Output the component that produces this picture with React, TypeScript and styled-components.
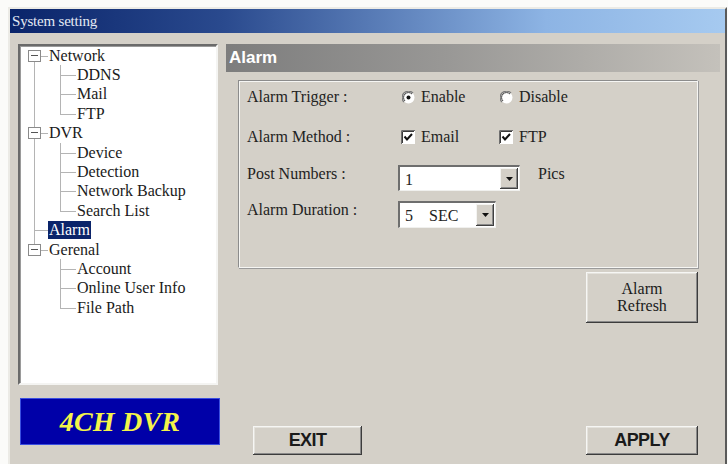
import React from "react";
import styled, { createGlobalStyle } from "styled-components";

const Global = createGlobalStyle`
  html, body { margin: 0; padding: 0; background: #fbfbf9; overflow: hidden; }
  body { width: 728px; height: 464px; }
  * { box-sizing: border-box; }
`;

const SERIF = `"Liberation Serif", "Times New Roman", serif`;
const SANS = `"Liberation Sans", Arial, sans-serif`;

const Window = styled.div`
  margin: 7px 0 0 8px;
  width: 719px;
  height: 470px;
  background: #d4d0c8;
  border-top: 2px solid #ecebe6;
  border-left: 2px solid #ecebe6;
  border-right: 2px solid #5a5a5a;
  display: flex;
  flex-direction: column;
`;

const TitleBar = styled.div`
  height: 24px;
  background: linear-gradient(to right, #0a246a 0%, #2a4a8e 30%, #8db4e4 75%, #a6caf0 100%);
  color: #e4eaf4;
  font-family: ${SERIF};
  font-size: 15px;
  line-height: 24px;
  padding-left: 2px;
  letter-spacing: -0.2px;
`;

const Content = styled.div`
  display: grid;
  grid-template-columns: 202px 494px;
  column-gap: 6px;
  padding: 11px 0 0 8px;
`;

const LeftCol = styled.div`
  display: flex;
  flex-direction: column;
`;

const TreePanel = styled.div`
  width: 200px;
  height: 341px;
  background: #ffffff;
  border-top: 2px solid #6a6a6a;
  border-left: 2px solid #6a6a6a;
  border-bottom: 2px solid #f4f4f2;
  border-right: 2px solid #f4f4f2;
  box-shadow: inset 1px 1px 0 #9a9a9a;
`;

const TreeRow = styled.div`
  display: flex;
  height: 19.4px;
  align-items: stretch;
`;

const Guide = styled.span<{ $x: number; $v: "full" | "top" | "bottom" | "none"; $h: boolean }>`
  position: relative;
  width: 28px;
  flex: none;
  &::before {
    content: "";
    position: absolute;
    left: ${(p) => p.$x}px;
    width: 1px;
    background: #b4b4b4;
    display: ${(p) => (p.$v === "none" ? "none" : "block")};
    top: ${(p) => (p.$v === "bottom" ? "50%" : "0")};
    bottom: ${(p) => (p.$v === "top" ? "50%" : "0")};
  }
  &::after {
    content: "";
    position: absolute;
    left: ${(p) => p.$x}px;
    right: 0;
    top: 50%;
    height: 1px;
    background: #b4b4b4;
    display: ${(p) => (p.$h ? "block" : "none")};
  }
`;

const Expander = styled.span`
  position: absolute;
  left: 8px;
  top: 50%;
  margin-top: -6px;
  width: 13px;
  height: 12px;
  background: #fff;
  border: 1px solid #8a8a8a;
  z-index: 1;
  &::before {
    content: "";
    position: absolute;
    left: 2px;
    right: 2px;
    top: 4px;
    height: 1px;
    background: #555;
  }
`;

const TreeLabel = styled.span<{ $selected?: boolean }>`
  font-family: ${SERIF};
  font-size: 16px;
  line-height: 18px;
  align-self: center;
  padding: 0 1px;
  color: ${(p) => (p.$selected ? "#ffffff" : "#1a1a1a")};
  background: ${(p) => (p.$selected ? "#0a246a" : "transparent")};
  white-space: nowrap;
`;

const Logo = styled.div`
  margin: 13px 0 0 2px;
  width: 200px;
  height: 47px;
  background: #0000a8;
  border: 1px solid #3a4ee0;
  display: flex;
  align-items: center;
  justify-content: center;
  color: #f4f44a;
  font-family: ${SERIF};
  font-weight: bold;
  font-style: italic;
  font-size: 28px;
  letter-spacing: 0.2px;
`;

const RightCol = styled.div`
  display: flex;
  flex-direction: column;
  height: 411px;
`;

const Header = styled.div`
  height: 28px;
  background: linear-gradient(to right, #7d7d7d 0%, #999896 45%, #c4c1bb 100%);
  color: #ffffff;
  font-family: ${SANS};
  font-weight: bold;
  font-size: 17px;
  line-height: 28px;
  padding-left: 3px;
`;

const Body = styled.div`
  flex: 1;
  display: flex;
  flex-direction: column;
  padding: 8px 22px 0 12px;
`;

const GroupBox = styled.div`
  height: 188px;
  border-top: 1px solid #8c8c8c;
  border-left: 1px solid #8c8c8c;
  border-right: 1px solid #f6f6f4;
  border-bottom: 1px solid #f6f6f4;
  box-shadow: inset 1px 1px 0 #f6f6f4, 1px 1px 0 #9a9a9a;
  padding: 6px 0 0 8px;
  display: grid;
  grid-template-columns: 151px 1fr;
  grid-auto-rows: min-content;
`;

const FieldLabel = styled.div<{ $h: number; $mt: number; $top?: boolean }>`
  height: ${(p) => p.$h}px;
  margin-top: ${(p) => p.$mt}px;
  display: flex;
  align-items: ${(p) => (p.$top ? "flex-start" : "center")};
  font-family: ${SERIF};
  font-size: 16px;
  line-height: 18px;
  color: #222;
  white-space: nowrap;
`;

const FieldControls = styled.div<{ $h: number; $mt: number; $top?: boolean }>`
  height: ${(p) => p.$h}px;
  margin-top: ${(p) => p.$mt}px;
  display: flex;
  align-items: ${(p) => (p.$top ? "flex-start" : "center")};
`;

const Option = styled.label`
  width: 98px;
  display: flex;
  align-items: center;
  font-family: ${SERIF};
  font-size: 16px;
  color: #222;
`;

const Indicator = styled.span`
  width: 20px;
  display: flex;
  justify-content: center;
  align-items: center;
  margin-right: 3px;
`;

const Combo = styled.div<{ $w: number; $h: number }>`
  width: ${(p) => p.$w}px;
  height: ${(p) => p.$h}px;
  background: #fff;
  border-top: 2px solid #6e6e6e;
  border-left: 2px solid #6e6e6e;
  border-right: 1px solid #f0f0ee;
  border-bottom: 1px solid #f0f0ee;
  display: flex;
  align-items: stretch;
  padding: 1px 1px 1px 0;
`;

const ComboText = styled.span`
  flex: 1;
  font-family: ${SERIF};
  font-size: 16px;
  line-height: 20px;
  padding: 2px 0 0 5px;
  color: #222;
  white-space: pre;
`;

const ArrowButton = styled.span`
  width: 18px;
  background: #d4d0c8;
  box-shadow: inset -1px -1px 0 #404040, inset 1px 1px 0 #f4f4f2, inset -2px -2px 0 #8a8a8a;
  display: flex;
  align-items: center;
  justify-content: center;
`;

const Suffix = styled.span`
  margin-left: 18px;
  font-family: ${SERIF};
  font-size: 16px;
  line-height: 18px;
  color: #222;
`;

const ButtonBase = styled.button<{ $w: number; $h: number }>`
  width: ${(p) => p.$w}px;
  height: ${(p) => p.$h}px;
  background: #d4d0c8;
  border: none;
  padding: 0;
  box-shadow: inset -1px -1px 0 #3c3c3c, inset 1px 1px 0 #f6f6f4, inset -2px -2px 0 #8a8a8a, inset 2px 2px 0 #e4e2dc;
  color: #1a1a1a;
  cursor: default;
`;

const RefreshButton = styled(ButtonBase)`
  align-self: flex-end;
  margin-top: 4px;
  font-family: ${SERIF};
  font-size: 16px;
  line-height: 17px;
  padding-bottom: 2px;
`;

const FooterRow = styled.div`
  margin-top: auto;
  display: flex;
  justify-content: space-between;
  padding-left: 15px;
`;

const BigButton = styled(ButtonBase)`
  font-family: ${SANS};
  font-weight: bold;
  font-size: 18px;
  letter-spacing: -0.6px;
`;

const Radio = ({ checked }: { checked: boolean }) => (
  <svg width="13" height="13" viewBox="0 0 13 13">
    <circle cx="6.5" cy="6.5" r="6" fill="#fff" />
    <path d="M2 11 A6 6 0 0 1 11 2" fill="none" stroke="#7a7a7a" strokeWidth="1.3" />
    <path d="M3 10 A4.6 4.6 0 0 1 10 3" fill="none" stroke="#404040" strokeWidth="1" />
    {checked && <circle cx="6.5" cy="6.5" r="2" fill="#111" />}
  </svg>
);

const Check = () => (
  <svg width="14" height="14" viewBox="0 0 14 14">
    <rect x="0" y="0" width="14" height="14" fill="#fff" />
    <path d="M0.5 14 V0.5 H14" fill="none" stroke="#6e6e6e" strokeWidth="1" />
    <path d="M1.5 13 V1.5 H13" fill="none" stroke="#3a3a3a" strokeWidth="1" />
    <path d="M3.5 6.5 L6 9.5 L11 4" fill="none" stroke="#111" strokeWidth="2" />
  </svg>
);

const DownArrow = () => (
  <svg width="7" height="4" viewBox="0 0 7 4">
    <path d="M0 0 H7 L3.5 4 Z" fill="#111" />
  </svg>
);

type Node = { label: string; children?: string[]; selected?: boolean };

const tree: Node[] = [
  { label: "Network", children: ["DDNS", "Mail", "FTP"] },
  { label: "DVR", children: ["Device", "Detection", "Network Backup", "Search List"] },
  { label: "Alarm", selected: true },
  { label: "Gerenal", children: ["Account", "Online User Info", "File Path"] },
];

const Tree = () => {
  const rows: React.ReactNode[] = [];
  tree.forEach((n, i) => {
    const first = i === 0;
    const lastRoot = i === tree.length - 1;
    const v = first ? "bottom" : lastRoot ? "top" : "full";
    rows.push(
      <TreeRow key={n.label}>
        <Guide $x={14} $v={v} $h={true}>
          {n.children && <Expander />}
        </Guide>
        <TreeLabel $selected={n.selected}>{n.label}</TreeLabel>
      </TreeRow>
    );
    (n.children || []).forEach((c, j) => {
      const lastChild = j === (n.children as string[]).length - 1;
      rows.push(
        <TreeRow key={n.label + c}>
          <Guide $x={14} $v={lastRoot ? "none" : "full"} $h={false} />
          <Guide $x={12} $v={lastChild ? "top" : "full"} $h={true} />
          <TreeLabel>{c}</TreeLabel>
        </TreeRow>
      );
    });
  });
  return <TreePanel>{rows}</TreePanel>;
};

export default function App() {
  return (
    <>
      <Global />
      <Window>
        <TitleBar>System setting</TitleBar>
        <Content>
          <LeftCol>
            <Tree />
            <Logo>4CH DVR</Logo>
          </LeftCol>
          <RightCol>
            <Header>Alarm</Header>
            <Body>
              <GroupBox>
                <FieldLabel $h={20} $mt={0}>Alarm Trigger :</FieldLabel>
                <FieldControls $h={20} $mt={0}>
                  <Option>
                    <Indicator><Radio checked /></Indicator>Enable
                  </Option>
                  <Option>
                    <Indicator><Radio checked={false} /></Indicator>Disable
                  </Option>
                </FieldControls>

                <FieldLabel $h={20} $mt={20}>Alarm Method :</FieldLabel>
                <FieldControls $h={20} $mt={20}>
                  <Option>
                    <Indicator><Check /></Indicator>Email
                  </Option>
                  <Option>
                    <Indicator><Check /></Indicator>FTP
                  </Option>
                </FieldControls>

                <FieldLabel $h={26} $mt={18} $top>Post Numbers :</FieldLabel>
                <FieldControls $h={26} $mt={18} $top>
                  <Combo $w={122} $h={26}>
                    <ComboText>1</ComboText>
                    <ArrowButton><DownArrow /></ArrowButton>
                  </Combo>
                  <Suffix>Pics</Suffix>
                </FieldControls>

                <FieldLabel $h={27} $mt={10} $top>Alarm Duration :</FieldLabel>
                <FieldControls $h={27} $mt={10} $top>
                  <Combo $w={98} $h={27}>
                    <ComboText>{"5    SEC"}</ComboText>
                    <ArrowButton><DownArrow /></ArrowButton>
                  </Combo>
                </FieldControls>
              </GroupBox>
              <RefreshButton $w={112} $h={51}>
                Alarm
                <br />
                Refresh
              </RefreshButton>
              <FooterRow>
                <BigButton $w={109} $h={29}>EXIT</BigButton>
                <BigButton $w={112} $h={29}>APPLY</BigButton>
              </FooterRow>
            </Body>
          </RightCol>
        </Content>
      </Window>
    </>
  );
}
